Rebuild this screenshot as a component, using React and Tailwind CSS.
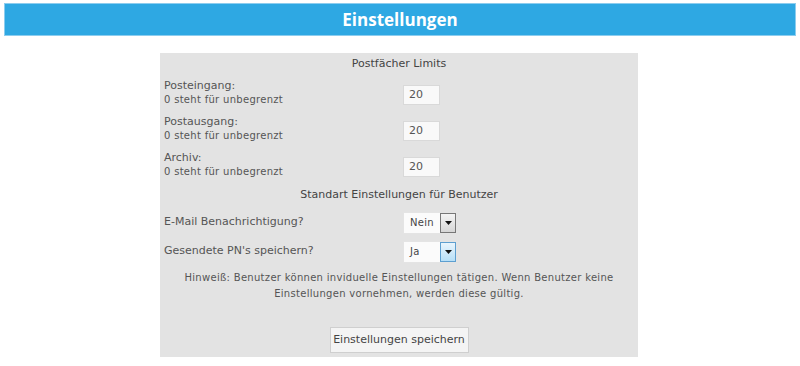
import React, { useState } from 'react';

const font = { fontFamily: '"DejaVu Sans", Verdana, sans-serif' };

function NumberField({ value }) {
  return (
    <input
      type="text"
      defaultValue={value}
      className="w-[37px] h-[20px] bg-[#f9f9f9] border border-[#d9d9d9] pl-[5px] text-[11px] text-[#555] outline-none"
      style={font}
    />
  );
}

function SelectBox({ value, active }) {
  return (
    <div className="flex w-[54px] h-[22px] bg-[#fbfbfb] border border-[#e4e4e4]">
      <span className="flex-1 flex items-center pl-[6px] text-[10px] tracking-[0.3px] text-[#444]">{value}</span>
      <span
        className={`w-[16px] h-full flex items-center justify-center border ${
          active
            ? 'border-[#5d9fd0] bg-gradient-to-b from-[#e9f5fd] to-[#b6dff7]'
            : 'border-[#777] bg-gradient-to-b from-[#f4f4f4] to-[#d6d6d6]'
        }`}
      >
        <svg width="7" height="4" viewBox="0 0 7 4">
          <path d="M0 0h7L3.5 4z" fill="#111" />
        </svg>
      </span>
    </div>
  );
}

function LimitRow({ label, value }) {
  return (
    <div className="grid grid-cols-2 h-[36px] shrink-0 items-center">
      <div className="pl-[4px] leading-[14px] text-[#555]">
        <div className="text-[11px]">{label}</div>
        <div className="text-[10px] tracking-[0.3px]">0 steht für unbegrenzt</div>
      </div>
      <div className="pl-[4px]">
        <NumberField value={value} />
      </div>
    </div>
  );
}

function SelectRow({ label, value, active }) {
  return (
    <div className="grid grid-cols-2 h-[29px] shrink-0 items-center">
      <div className="pl-[4px] text-[11px] text-[#555]">{label}</div>
      <div className="pl-[4px]">
        <SelectBox value={value} active={active} />
      </div>
    </div>
  );
}

export default function App() {
  const [saved, setSaved] = useState(false);

  return (
    <div className="w-[800px] h-[366px] bg-white overflow-hidden" style={font}>
      {/* Title bar */}
      <div className="mx-[4px] mt-[3px] h-[33px] bg-[#2ea8e3] border border-[#8ccdef] flex items-center justify-center">
        <h1
          className="text-white text-[17px] font-bold"
          style={{ fontFamily: '"Open Sans", sans-serif' }}
        >
          Einstellungen
        </h1>
      </div>

      {/* Settings panel */}
      <div className="ml-[160px] mt-[17px] w-[478px] h-[304px] bg-[#e3e3e3] flex flex-col">
        <div className="h-[22px] shrink-0 flex items-center justify-center text-[11px] text-[#444]">
          Postfächer Limits
        </div>

        <LimitRow label="Posteingang:" value="20" />
        <LimitRow label="Postausgang:" value="20" />
        <LimitRow label="Archiv:" value="20" />

        <div className="h-[25px] shrink-0 flex items-center justify-center text-[11px] text-[#444]">
          Standart Einstellungen für Benutzer
        </div>

        <SelectRow label="E-Mail Benachrichtigung?" value="Nein" />
        <SelectRow label="Gesendete PN's speichern?" value="Ja" active />

        <p className="mt-[4px] px-[10px] text-center text-[10px] tracking-[0.3px] leading-[16px] text-[#555]">
          Hinweiß: Benutzer können inviduelle Einstellungen tätigen. Wenn Benutzer keine
          <br />
          Einstellungen vornehmen, werden diese gültig.
        </p>

        <div className="flex justify-center mt-[25px]">
          <button
            onClick={() => setSaved(!saved)}
            className="w-[139px] h-[26px] bg-[#f4f4f4] border border-[#cfcfcf] text-[11px] text-[#444]"
            style={font}
          >
            Einstellungen speichern
          </button>
        </div>
      </div>
    </div>
  );
}
